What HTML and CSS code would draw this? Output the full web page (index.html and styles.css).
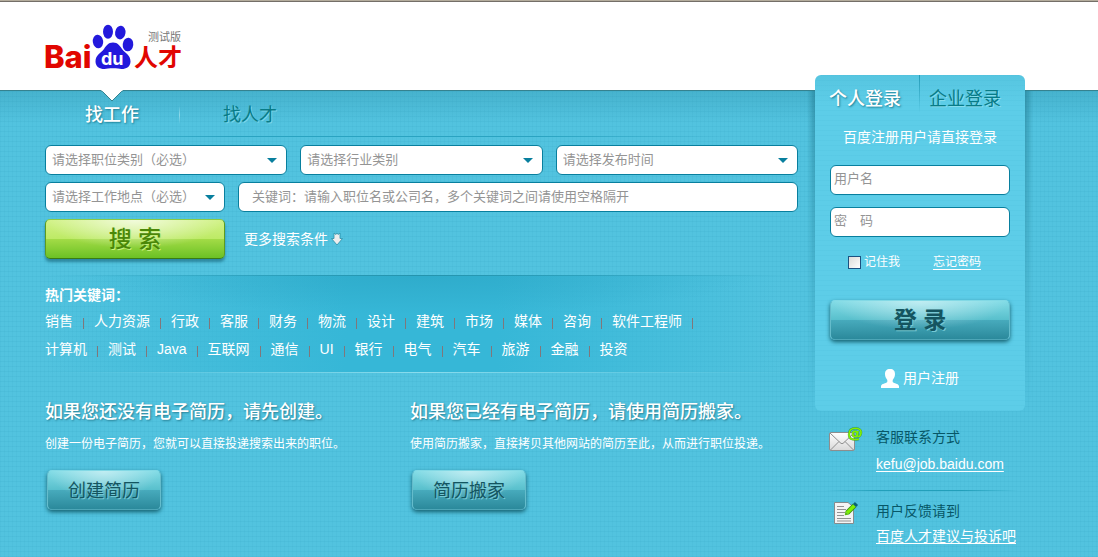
FILE: index.html
```html
<!DOCTYPE html>
<html lang="zh-CN">
<head>
<meta charset="utf-8">
<title>Baidu人才</title>
<link rel="stylesheet" href="styles.css">
</head>
<body>
<header class="header">
  <svg class="logo" viewBox="0 0 138 46" width="138" height="46" role="img" aria-label="Baidu人才 测试版">
    <text class="logo-latin" x="-1" y="45">Bai</text>
    <g class="paw">
      <ellipse cx="53" cy="18.5" rx="5.2" ry="6.8" transform="rotate(-8 53 18.5)"/>
      <ellipse cx="63" cy="8.8" rx="5" ry="7"/>
      <ellipse cx="75.3" cy="9.6" rx="5.2" ry="6.8" transform="rotate(8 75.3 9.6)"/>
      <ellipse cx="83" cy="21.5" rx="5.3" ry="6.8" transform="rotate(6 83 21.5)"/>
      <path d="M68 19.500C73 19.500 75 23 77 26C80 30 85.500 32 85.500 38.500C85.500 45 79 47 73 45.600C70 45 66 45 63 45.600C57 47 50.500 45 50.500 38.500C50.500 32 56 30 59 26C61 23 63 19.500 68 19.500Z"/>
    </g>
    <text class="logo-du" x="56" y="42">du</text>
    <text class="logo-cjk" x="89" y="43">人才</text>
    <text class="logo-tag" x="103" y="18">测试版</text>
  </svg>
</header>

<main class="main">
  <section class="content">
    <nav class="tabs">
      <a class="tab tab-active" href="#jobs">找工作
        <svg class="notch" viewBox="0 0 22 12" width="22" height="12" aria-hidden="true"><path d="M0 0H22L21 1L11 11L1 1Z" fill="#fff"/><path d="M0.500 1.500H1.500L11 11L20.500 1.500H21.500" fill="none" stroke="#35828f"/></svg>
      </a>
      <a class="tab" href="#talent">找人才</a>
    </nav>

    <form class="search">
      <div class="row row-three">
        <label class="select-box"><select aria-label="职位类别"><option>请选择职位类别（必选）</option></select><svg viewBox="0 0 10 5" width="10" height="5" aria-hidden="true"><path d="M0 0H10L5 5Z"/></svg></label>
        <label class="select-box"><select aria-label="行业类别"><option>请选择行业类别</option></select><svg viewBox="0 0 10 5" width="10" height="5" aria-hidden="true"><path d="M0 0H10L5 5Z"/></svg></label>
        <label class="select-box"><select aria-label="发布时间"><option>请选择发布时间</option></select><svg viewBox="0 0 10 5" width="10" height="5" aria-hidden="true"><path d="M0 0H10L5 5Z"/></svg></label>
      </div>
      <div class="row row-key">
        <label class="select-box"><select aria-label="工作地点"><option>请选择工作地点（必选）</option></select><svg viewBox="0 0 10 5" width="10" height="5" aria-hidden="true"><path d="M0 0H10L5 5Z"/></svg></label>
        <input class="field field-key" type="text" aria-label="关键词" placeholder="关键词：请输入职位名或公司名，多个关键词之间请使用空格隔开">
      </div>
      <div class="row row-submit">
        <button class="btn btn-green" type="submit">搜 索</button>
        <a class="more" href="#more">更多搜索条件
          <svg viewBox="0 0 12 14" width="12" height="14" aria-hidden="true"><path d="M3 1L5 2.500L6 1L7 2.500L9 1V6.500H11.500L6 13L0.500 6.500H3Z" fill="#ededed" stroke="#298fa8" stroke-width="0.800"/></svg>
        </a>
      </div>
    </form>

    <section class="hot">
      <h2 class="hot-title">热门关键词：</h2>
      <ul class="words">
        <li><a href="#k">销售</a></li><li><a href="#k">人力资源</a></li><li><a href="#k">行政</a></li><li><a href="#k">客服</a></li><li><a href="#k">财务</a></li><li><a href="#k">物流</a></li><li><a href="#k">设计</a></li><li><a href="#k">建筑</a></li><li><a href="#k">市场</a></li><li><a href="#k">媒体</a></li><li><a href="#k">咨询</a></li><li><a href="#k">软件工程师</a></li>
      </ul>
      <ul class="words words-last">
        <li><a href="#k">计算机</a></li><li><a href="#k">测试</a></li><li><a href="#k">Java</a></li><li><a href="#k">互联网</a></li><li><a href="#k">通信</a></li><li><a href="#k">UI</a></li><li><a href="#k">银行</a></li><li><a href="#k">电气</a></li><li><a href="#k">汽车</a></li><li><a href="#k">旅游</a></li><li><a href="#k">金融</a></li><li><a href="#k">投资</a></li>
      </ul>
    </section>

    <section class="resumes">
      <article class="resume">
        <h3>如果您还没有电子简历，请先创建。</h3>
        <p>创建一份电子简历，您就可以直接投递搜索出来的职位。</p>
        <button class="btn btn-teal btn-small" type="button">创建简历</button>
      </article>
      <article class="resume">
        <h3>如果您已经有电子简历，请使用简历搬家。</h3>
        <p>使用简历搬家，直接拷贝其他网站的简历至此，从而进行职位投递。</p>
        <button class="btn btn-teal btn-small" type="button">简历搬家</button>
      </article>
    </section>
  </section>

  <aside class="side">
    <form class="login">
      <nav class="login-tabs">
        <a class="tab-active" href="#personal">个人登录</a>
        <a href="#company">企业登录</a>
      </nav>
      <p class="hint">百度注册用户请直接登录</p>
      <input class="field" type="text" aria-label="用户名" placeholder="用户名">
      <input class="field" type="password" aria-label="密码" placeholder="密　码">
      <div class="options">
        <label><input class="check" type="checkbox">记住我</label>
        <a href="#forgot">忘记密码</a>
      </div>
      <button class="btn btn-teal btn-login" type="submit">登 录</button>
      <a class="register" href="#register">
        <svg viewBox="0 0 18 19" width="18" height="19" aria-hidden="true"><path d="M9 0C12.500 0 14 2 14 5C14 8 12.800 9.500 11.700 11V13C13 14.500 17.500 14.500 18 17V19H0V17C0.500 14.500 5 14.500 6.300 13V11C5.200 9.500 4 8 4 5C4 2 5.500 0 9 0Z" fill="#fff"/></svg>
        用户注册
      </a>
    </form>

    <div class="contact">
      <svg viewBox="0 0 34 25" width="34" height="25" aria-hidden="true">
        <defs><linearGradient id="paper" x1="0" y1="0" x2="0" y2="1"><stop offset="0" stop-color="#fff"/><stop offset="1" stop-color="#d9d9d9"/></linearGradient></defs>
        <rect x="0.500" y="5.500" width="25" height="18" rx="1.500" fill="url(#paper)" stroke="#8e8e8e"/>
        <path d="M1 6L11 15.500C12.500 17 13.500 17 15 15.500L25 6M1.500 23L10 14.500M24.500 23L16 14.500" fill="none" stroke="#8e8e8e"/>
        <g fill="none" stroke="#247b3b" stroke-width="2.400" opacity="0.700"><ellipse cx="26" cy="7" rx="2.300" ry="2.600"/><path d="M29 4L28.300 9Q30 10.500 31.500 8C33.500 3 30 1.300 26.500 1.300C22 1.300 20 4 20 7.500C20 12 23.500 13.500 30 12"/></g>
        <g fill="none" stroke="#82f000" stroke-width="1.600"><ellipse cx="26" cy="7" rx="2.300" ry="2.600"/><path d="M29 4L28.300 9Q30 10.500 31.500 8C33.500 3 30 1.300 26.500 1.300C22 1.300 20 4 20 7.500C20 12 23.500 13.500 30 12"/></g>
      </svg>
      <div><p>客服联系方式</p><a href="mailto:kefu@job.baidu.com">kefu@job.baidu.com</a></div>
    </div>
    <div class="contact contact-last">
      <svg viewBox="-5 0 34 25" width="34" height="25" aria-hidden="true">
        <path d="M0.500 1.500H14L19.500 6V22.500H0.500Z" fill="#f4f4f4" stroke="#858c8e"/>
        <path d="M3 5.500H10M3 8.500H12M3 11.500H11M3 14.500H10M3 17.500H17M3 20H17" stroke="#929292"/>
        <path d="M13 12L20.500 4.500" stroke="#3a8f16" stroke-width="5"/><path d="M13 12L20.500 4.500" stroke="#7df000" stroke-width="3.200"/>
        <path d="M20.500 4.500L22.500 2.500" stroke="#0b6373" stroke-width="4.500"/><path d="M10.800 14.300L11.300 10.500L14.500 13.700Z" fill="#5dbb13"/>
      </svg>
      <div><p>用户反馈请到</p><a href="#feedback">百度人才建议与投诉吧</a></div>
    </div>
  </aside>
</main>
</body>
</html>
```
FILE: styles.css
```css
* { box-sizing: border-box; }

body {
  margin: 0;
  min-height: 100vh;
  display: flex;
  flex-direction: column;
  background: #4fc0dc;
  color: #fff;
  font: 14px/20px "Liberation Sans", "Noto Sans CJK SC", sans-serif;
}

h2, h3, p, ul { margin: 0; padding: 0; }
a { color: inherit; text-decoration: none; }
input, select, button { font-family: inherit; }

.header {
  height: 90px;
  padding: 22px 45px 0;
  background: #fff;
  border-top: 1px solid #b4ac9c;
  box-shadow: inset 0 1px #746f68;
}
.logo { display: block; overflow: visible; }
.logo-latin { font-family: Inter, "Liberation Sans", sans-serif; font-size: 31px; font-weight: 800; fill: #e10601; }
.logo-du { font-family: Inter, "Liberation Sans", sans-serif; font-size: 18px; font-weight: bold; fill: #fff; }
.logo-cjk { font-size: 24px; font-weight: bold; fill: #e10601; }
.logo-tag { font-size: 11px; fill: #777; }
.paw { fill: #2319dc; }

.main {
  flex: 1;
  isolation: isolate;
  display: grid;
  grid-template-columns: minmax(0, 1fr) 210px;
  gap: 17px;
  padding: 0 73px 0 45px;
  border-top: 1px solid #35828f;
  background:
    linear-gradient(rgba(30, 120, 145, 0.22), rgba(30, 120, 145, 0) 32px),
    repeating-linear-gradient(90deg, rgba(20, 130, 165, 0.05) 0 1px, transparent 1px 4px),
    repeating-linear-gradient(rgba(20, 130, 165, 0.08) 0 1px, transparent 1px 5px),
    #52c3df;
}

.tabs {
  display: flex;
  height: 46px;
  border-bottom: 1px solid;
  border-image: linear-gradient(90deg, transparent, #2aa3c1 25%, #2aa3c1 65%, transparent 90%) 1;
}
.tab {
  position: relative;
  padding: 14px 40px 0;
  font-size: 18px;
  color: #087b87;
  text-shadow: 1px 1px #7ad5e8;
}
.tab + .tab {
  padding-left: 44px;
  background: linear-gradient(transparent, #8fd9ea, transparent) 0 15px / 1px 18px no-repeat;
}
.tab-active, .login-tabs .tab-active {
  color: #fff;
  font-weight: 500;
  text-shadow: 1px 1px 2px #197c92;
}
.notch { position: absolute; top: -1px; left: calc(50% - 11px); }

.search { display: grid; gap: 7px; padding-top: 8px; }
.row { display: grid; gap: 13px; align-items: center; }
.row-three { grid-template-columns: repeat(3, 1fr); }
.row-key, .row-submit { grid-template-columns: 180px minmax(0, 1fr); }

.select-box { display: grid; align-items: center; }
.select-box > * { grid-area: 1 / 1; }
.select-box svg { justify-self: end; margin-right: 10px; fill: #087f9e; pointer-events: none; }
.field, .select-box select {
  width: 100%;
  height: 30px;
  margin: 0;
  padding: 0 6px 2px;
  border: 1px solid #087f9e;
  border-radius: 6px;
  background: #fff;
  color: #949494;
  font-size: 13px;
  appearance: none;
}
.field::placeholder { color: #949494; opacity: 1; }
.field-key { padding-left: 13px; }

.btn {
  display: block;
  height: 40px;
  padding: 0 0 2px;
  border-radius: 5px;
  border: 1px solid;
  cursor: pointer;
}
.btn-green {
  padding-bottom: 4px;
  color: #4a8708;
  border-color: #8acb46 #5d9b20 #397b15;
  font-size: 23px;
  font-weight: 500;
  text-shadow: 1px 1px #c6ef7b;
  background:
    radial-gradient(ellipse 50% 75% at 50% 0, rgba(255, 255, 255, 0.7), transparent),
    linear-gradient(#d2f288, #bdea65 50%, #a2db46 51%, #6bc124);
  box-shadow: 0 3px 3px rgba(20, 95, 115, 0.6);
}
.btn-teal {
  color: #145560;
  border-color: #82d9e5 #65bccb #4da6b7;
  text-shadow: 1px 1px #75c9d5;
  background:
    radial-gradient(ellipse 50% 75% at 50% 0, rgba(255, 255, 255, 0.5), transparent),
    linear-gradient(#82dce6, #58bfcc 50%, #47aabc 51%, #2b899b);
  box-shadow: 0 2px 4px #14606f;
}
.btn-small { width: 114px; font-size: 18px; }
.btn-login { width: 100%; padding-bottom: 5px; font-size: 23px; font-weight: bold; }

.more { display: flex; align-items: center; gap: 3px; padding-left: 6px; }

.hot {
  margin-top: 16px;
  padding: 10px 0 14px;
  background:
    linear-gradient(90deg, transparent, rgba(35, 145, 170, 0.9) 50%, transparent) top / 100% 1px no-repeat,
    linear-gradient(90deg, transparent, #8bdced 50%, transparent) bottom / 100% 1px no-repeat,
    radial-gradient(ellipse 45% 40% at 50% 0, rgba(30, 145, 175, 0.3), transparent),
    linear-gradient(90deg, transparent, #36b7d7 40%, #36b7d7 60%, transparent 98%);
}
.hot-title { font-size: 14px; line-height: 20px; }
.words { display: flex; flex-wrap: wrap; padding-top: 6px; list-style: none; }
.words-last { padding-top: 8px; }
.words li { display: flex; align-items: center; }
.words li::after {
  content: "";
  width: 1px;
  height: 11px;
  margin: 4px 10px 0;
  background: #80777b;
}
.words-last li:last-child::after { content: none; }

.resumes { display: grid; grid-template-columns: 365px 1fr; margin-top: 27px; }
.resume { white-space: nowrap; }
.resume h3 {
  font-size: 18px;
  line-height: 24px;
  font-weight: 500;
  text-shadow: 1px 1px 2px #277e92;
}
.resume p { padding-top: 10px; font-size: 12px; }
.resume .btn { margin: 16px 2px 0; }

.side { margin-top: -16px; }
.login {
  position: relative;
  display: flex;
  flex-direction: column;
  height: 336px;
  padding: 0 15px;
  border-radius: 6px;
  background:
    linear-gradient(rgba(50, 155, 180, 0.15), transparent 30px),
    repeating-linear-gradient(rgba(25, 145, 180, 0.05) 0 1px, transparent 1px 5px),
    #5dcde8;
}
.login::before {
  content: "";
  position: absolute;
  z-index: -1;
  inset: 16px -8px 8px;
  background: linear-gradient(90deg, transparent, rgba(20, 100, 120, 0.5) 9px, rgba(20, 100, 120, 0.5) calc(100% - 9px), transparent);
  mask-image: linear-gradient(#000, transparent);
}
.login-tabs { display: flex; margin: 0 -15px; font-size: 18px; }
.login-tabs a {
  padding: 14px 0 6px 14px;
  width: 104px;
  line-height: 20px;
  color: #087b87;
  text-shadow: 1px 1px #86ddec;
}
.login-tabs a + a {
  padding-left: 10px;
  background: linear-gradient(#249cb8, transparent) 0 0 / 1px 38px no-repeat;
}
.hint { margin: 12px 0 18px; text-align: center; }
.login .field { padding-left: 3px; padding-bottom: 4px; }
.login .field + .field { margin-top: 12px; }
.options {
  display: flex;
  gap: 33px;
  padding: 15px 18px 0;
  font-size: 12px;
  line-height: 20px;
}
.options label { display: flex; align-items: center; gap: 3px; }
.options a { height: 18px; border-bottom: 1px solid; }
.check {
  width: 13px;
  height: 13px;
  margin: 0;
  appearance: none;
  border: 1px solid #1c5180;
  background: linear-gradient(135deg, #dcdcd8, #fff);
}
.check:checked { background: #1c5180; }
.btn-login { margin-top: 28px; }
.register { display: flex; align-items: center; align-self: center; gap: 4px; margin-top: 28px; }

.contact { display: flex; gap: 13px; padding: 16px 0 16px 14px; }
.contact svg { flex: none; }
.contact p { color: #075767; }
.contact a { display: inline-block; margin-top: 7px; text-decoration: underline; text-underline-offset: 2px; white-space: nowrap; }
.contact-last {
  padding-top: 11px;
  padding-bottom: 0;
  background: linear-gradient(90deg, transparent 5%, #229fba 30%, #229fba 70%, transparent 97%) 0 0 / 100% 1px no-repeat;
}
.contact-last a { margin-top: 5px; }
```
